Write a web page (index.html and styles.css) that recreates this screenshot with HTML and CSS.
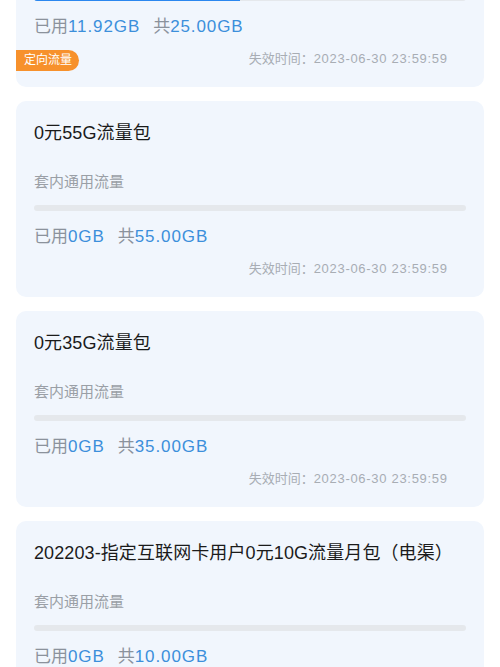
FILE: index.html
```html
<!DOCTYPE html>
<html>
<head>
    <title>流量包</title>
    <link rel="stylesheet" href="styles.css">
</head>
<body>
    <div class="package-list">
        <div class="card">
            <div class="card-title">畅享套餐</div>
            <div class="card-sub">定向流量</div>
            <div class="bar"><div class="bar-fill" style="width: 47.7%;"></div></div>
            <div class="usage">已用<span class="num">11.92GB</span><span class="total">共<span class="num">25.00GB</span></span></div>
            <div class="expire">失效时间：<span class="time">2023-06-30 23:59:59</span></div>
            <span class="tag">定向流量</span>
        </div>

        <div class="card">
            <div class="card-title">0元55G流量包</div>
            <div class="card-sub">套内通用流量</div>
            <div class="bar"><div class="bar-fill" style="width: 0%;"></div></div>
            <div class="usage">已用<span class="num">0GB</span><span class="total">共<span class="num">55.00GB</span></span></div>
            <div class="expire">失效时间：<span class="time">2023-06-30 23:59:59</span></div>
        </div>

        <div class="card">
            <div class="card-title">0元35G流量包</div>
            <div class="card-sub">套内通用流量</div>
            <div class="bar"><div class="bar-fill" style="width: 0%;"></div></div>
            <div class="usage">已用<span class="num">0GB</span><span class="total">共<span class="num">35.00GB</span></span></div>
            <div class="expire">失效时间：<span class="time">2023-06-30 23:59:59</span></div>
        </div>

        <div class="card">
            <div class="card-title">202203-指定互联网卡用户0元10G流量月包（电渠）</div>
            <div class="card-sub">套内通用流量</div>
            <div class="bar"><div class="bar-fill" style="width: 0%;"></div></div>
            <div class="usage">已用<span class="num">0GB</span><span class="total">共<span class="num">10.00GB</span></span></div>
            <div class="expire">失效时间：<span class="time">2023-06-30 23:59:59</span></div>
        </div>
    </div>
</body>
</html>
```

FILE: styles.css
```css
body {
    margin: 0;
    background: #fff;
    font-family: "Liberation Sans", "Noto Sans CJK SC", sans-serif;
    overflow: hidden;
}

.package-list {
    margin-top: -109px;
    padding: 0 16px;
    display: flex;
    flex-direction: column;
    gap: 14px;
}

.card {
    position: relative;
    height: 196px;
    box-sizing: border-box;
    padding: 20px 18px 0 18px;
    background: #f1f6fd;
    border-radius: 10px;
}

.card-title {
    font-size: 18px;
    line-height: 24px;
    color: #1b1b1b;
    white-space: nowrap;
    letter-spacing: 0.1px;
}

.card-sub {
    margin-top: 26px;
    font-size: 15px;
    line-height: 22px;
    color: #9a9fa6;
}

.bar {
    margin-top: 12px;
    height: 6px;
    border-radius: 3px;
    background: #e5e8ec;
    overflow: hidden;
}

.bar-fill {
    height: 100%;
    background: #2b87ef;
}

.usage {
    margin-top: 14px;
    font-size: 17px;
    line-height: 24px;
    color: #8b929c;
}

.usage .num {
    color: #3c8fdb;
    letter-spacing: 0.9px;
}

.usage .total {
    margin-left: 13px;
}

.expire {
    margin-top: 11px;
    padding-right: 19px;
    text-align: right;
    font-size: 13px;
    line-height: 18px;
    color: #a8adb4;
}

.expire .time {
    letter-spacing: 0.7px;
    margin-right: -0.7px;
}

.tag {
    position: absolute;
    left: 0;
    top: 159px;
    height: 21px;
    line-height: 21px;
    padding: 0 7px 0 8px;
    background: #f7912c;
    color: #fff;
    font-size: 12px;
    border-radius: 0 11px 11px 0;
}
```
